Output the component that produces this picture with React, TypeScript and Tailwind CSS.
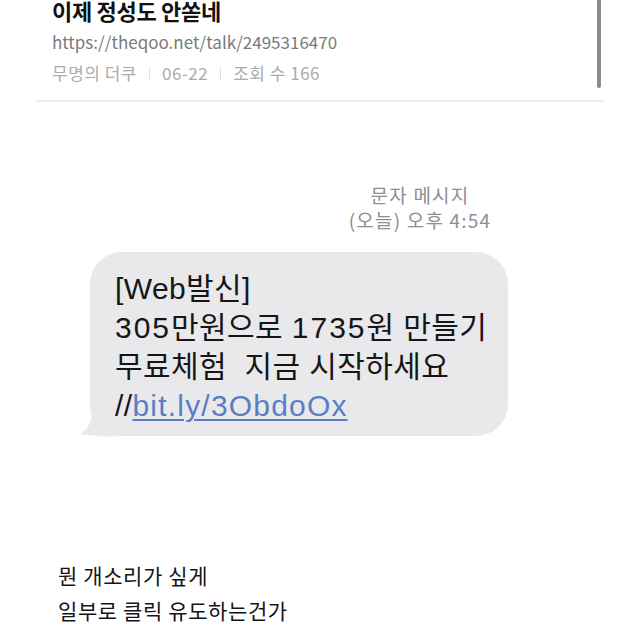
import React from "react";

export default function App() {
  return (
    <div
      className="relative w-[640px] h-[640px] bg-white overflow-hidden"
      style={{ fontFamily: '"Noto Sans CJK KR", "Noto Sans", sans-serif' }}
    >
      {/* scrollbar overlay */}
      <div className="absolute left-[597px] top-0 w-[4px] h-[88px] rounded-b-full bg-[#8c8c8c]" />

      {/* header */}
      <div className="pl-[52px] pr-[40px]">
        <div className="text-[22px] leading-[22px] font-bold text-[#111] -mt-[1px] tracking-[-0.3px]">
          이제 정성도 안쏟네
        </div>
        <div className="mt-[11px] text-[17px] leading-[20px] text-[#7a7a7a]">
          https://theqoo.net/talk/2495316470
        </div>
        <div className="mt-[11px] flex items-center text-[17px] leading-[20px] text-[#ababab] tracking-[0.5px]">
          <span>무명의 더쿠</span>
          <span className="mx-[12px] w-px h-[13px] bg-[#e2e2e2]" />
          <span>06-22</span>
          <span className="mx-[12px] w-px h-[13px] bg-[#e2e2e2]" />
          <span>조회 수 166</span>
        </div>
      </div>
      <div className="ml-[37px] mt-[17px] w-[566px] h-[2px] bg-[#ececec]" />

      {/* message stamp */}
      <div className="ml-[300px] w-[240px] mt-[80px] text-center text-[19px] leading-[25px] text-[#8e8e93] tracking-[1.2px]">
        <div>문자 메시지</div>
        <div>(오늘) 오후 4:54</div>
      </div>

      {/* bubble */}
      <div className="relative ml-[90px] mt-[20px] w-[418px] h-[184px]">
        <svg
          className="absolute left-[-12px] bottom-[-2px]"
          width="40"
          height="30"
          viewBox="0 0 40 30"
        >
          <path d="M40 0 L40 28 C28 29 16 28 2 26 C10 22 14 14 14 0 Z" fill="#e9e9eb" />
        </svg>
        <div
          className="relative w-full h-full rounded-[32px] bg-[#e9e9eb] pl-[25px] pt-[17px] text-[30px] leading-[39px] text-[#161616] tracking-[0.4px]"
          style={{ fontFamily: '"Liberation Sans", "Noto Sans CJK KR", sans-serif' }}
        >
          <div>[Web발신]</div>
          <div>
            <span className="tracking-[2px]">305</span>만원으로 <span className="tracking-[2px]">1735</span>원 만들기
          </div>
          <div>무료체험&nbsp;&nbsp;지금 시작하세요</div>
          <div>
            //<span className="text-[#5a7ec4] underline decoration-[1.5px] underline-offset-[3px] tracking-[1.2px]">bit.ly/3ObdoOx</span>
          </div>
        </div>
      </div>

      {/* comment */}
      <div className="ml-[58px] mt-[122px] text-[21px] leading-[35px] text-[#151515] tracking-[0.6px]">
        <div>뭔 개소리가 싶게</div>
        <div>일부로 클릭 유도하는건가</div>
      </div>
    </div>
  );
}
